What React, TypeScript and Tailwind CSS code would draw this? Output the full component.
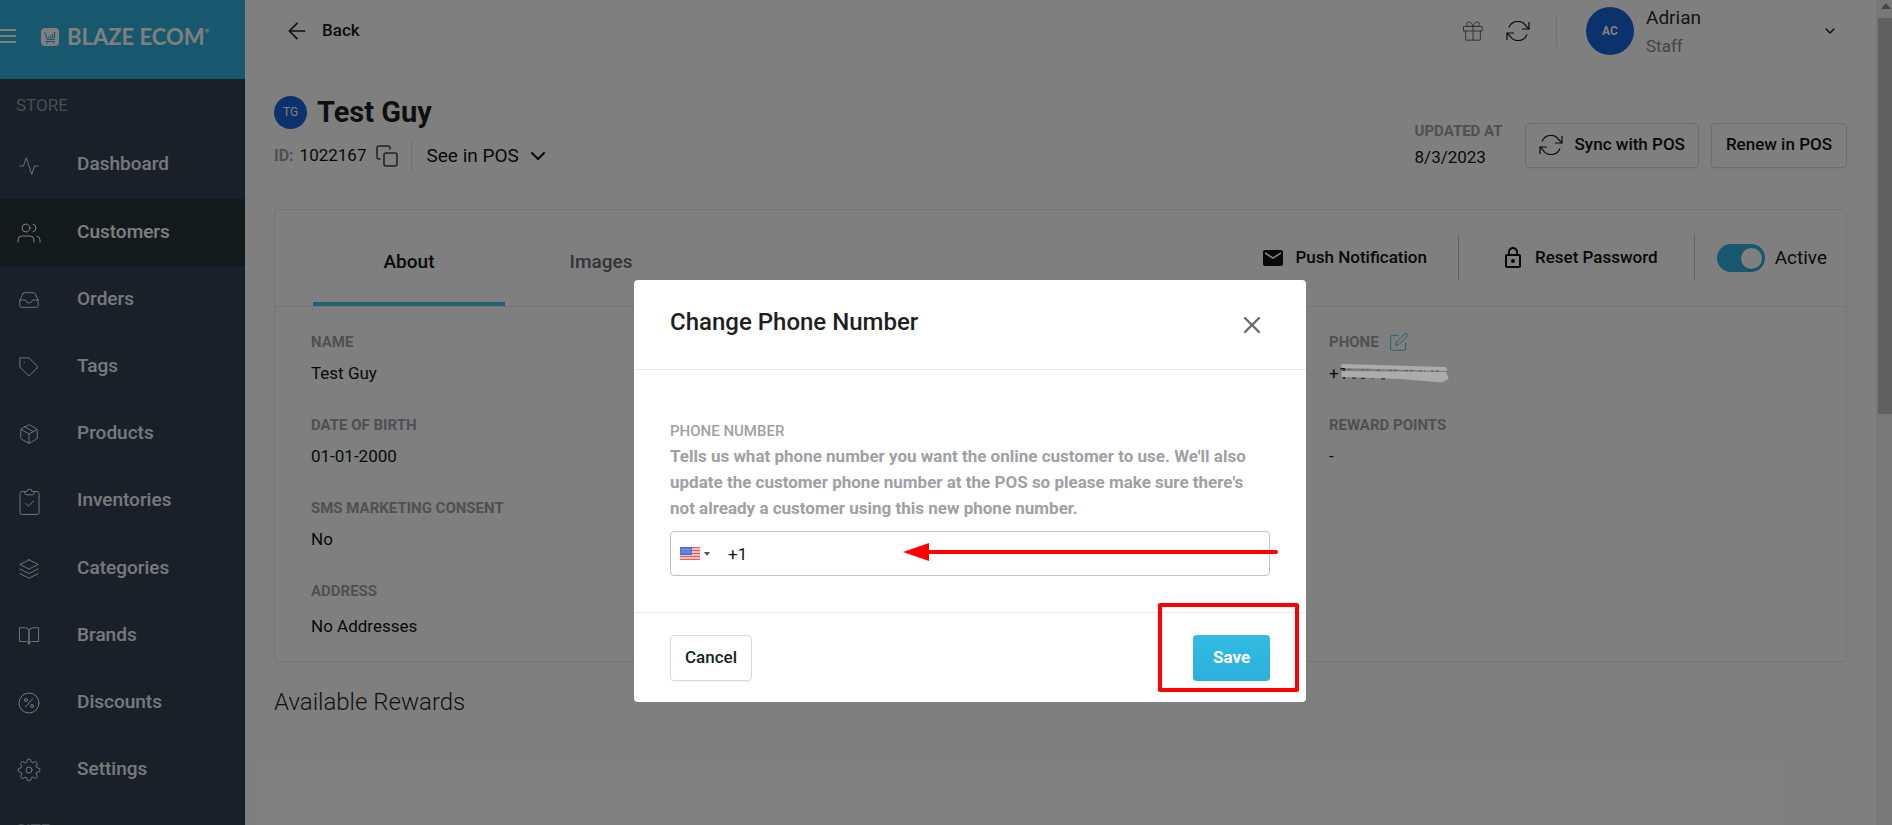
import type { ComponentType, ReactNode } from 'react';
import {
  FiActivity,
  FiArrowLeft,
  FiBookOpen,
  FiChevronDown,
  FiCopy,
  FiEdit,
  FiGift,
  FiInbox,
  FiLayers,
  FiPackage,
  FiSettings,
  FiTag,
  FiUsers,
  FiX,
} from 'react-icons/fi';
import { MdEmail, MdLockOutline } from 'react-icons/md';

type IconProps = { className?: string };

function SyncIcon({ className }: IconProps) {
  return (
    <svg viewBox="0 0 24 20" fill="none" stroke="currentColor" strokeWidth="1.2" className={className}>
      <path d="M23 1v7h-7M1 19v-7h7" />
      <path d="M3 6.500a9.500 9.500 0 0 1 17-1.500l3 3M21 13.500a9.500 9.500 0 0 1-17 1.500l-3-3" />
    </svg>
  );
}

function ClipboardIcon({ className }: IconProps) {
  return (
    <svg viewBox="0 0 22 28" fill="none" stroke="currentColor" strokeLinejoin="round" strokeLinecap="round" className={className}>
      <path d="M6 3H3a2 2 0 0 0-2 2v20a2 2 0 0 0 2 2h16a2 2 0 0 0 2-2V5a2 2 0 0 0-2-2h-3" />
      <path d="M6 3h2.500a2.500 2.500 0 0 1 5 0H16v1.500A2 2 0 0 1 14 6.500H8A2 2 0 0 1 6 4.500z" />
      <path d="M7 15.500l3 3 5-5.500" />
    </svg>
  );
}

function DiscountIcon({ className }: IconProps) {
  return (
    <svg viewBox="0 0 22 22" fill="none" stroke="currentColor" strokeLinecap="round" className={className}>
      <circle cx="11" cy="11" r="10" />
      <circle cx="8" cy="8" r="1.500" />
      <circle cx="14" cy="14" r="1.500" />
      <path d="M14.500 7l-7 8" />
    </svg>
  );
}

function LogoMark({ className }: IconProps) {
  return (
    <svg viewBox="0 0 18 18" className={className}>
      <rect width="18" height="18" rx="4" fill="#fff" />
      <g fill="none" stroke="#2eb1dc">
        <path d="M3 5h1.500l1.500 6.500h7.500M4.500 13.500h9.500" />
        <path d="M7.500 10.500V8.500M9.500 10.500V7.500M11.500 10.500V6M13.500 10.500V4" strokeWidth="1.200" />
      </g>
      <circle cx="6" cy="15" r="0.800" fill="#2eb1dc" />
      <circle cx="12.500" cy="15" r="0.800" fill="#2eb1dc" />
    </svg>
  );
}

function UsFlag({ className }: IconProps) {
  return (
    <svg viewBox="0 0 20 13" className={className}>
      <rect width="20" height="13" fill="#f7dcdc" />
      <path d="M0 .5h20M0 3.500h20M0 6.500h20M0 9.500h20M0 12.500h20" stroke="#e2605d" strokeWidth="1.500" />
      <rect width="12" height="8" fill="#4a74d8" />
      <path d="M1.500 2.500h9M1.500 5h9" stroke="#c5d3f5" strokeDasharray="1 1" />
    </svg>
  );
}

// Marker strokes hiding the digits, kept above the backdrop
function Redaction({ className }: IconProps) {
  return (
    <svg viewBox="0 0 108 21" className={className}>
      <path d="M2 3L104 6" stroke="#acacac" strokeWidth="4" strokeLinecap="round" />
      <path d="M2 9.500L104 10.500L106 15L101 18L60 14.500L2 12.500z" fill="#acacac" stroke="#acacac" strokeWidth="3" strokeLinejoin="round" />
      <path d="M2 6.300h10M20 6.800h9M36 7h5M48 7.300h9M64 7.500h8M78 7.800h6M90 8h9" stroke="#4a4a4a" strokeWidth="0.800" strokeDasharray="3 2" />
      <path d="M3 14.500h1M11 15.200h4M20 15.400h4M31 15.600h1M40 15.800h4" stroke="#222" />
    </svg>
  );
}

const NAV: { label: string; icon: ComponentType<IconProps>; size: string; active?: boolean }[] = [
  { label: 'Dashboard', icon: FiActivity, size: 'size-[22px]' },
  { label: 'Customers', icon: FiUsers, size: 'size-6', active: true },
  { label: 'Orders', icon: FiInbox, size: 'size-[22px]' },
  { label: 'Tags', icon: FiTag, size: 'size-[22px]' },
  { label: 'Products', icon: FiPackage, size: 'size-[22px]' },
  { label: 'Inventories', icon: ClipboardIcon, size: 'w-[21px] h-7' },
  { label: 'Categories', icon: FiLayers, size: 'size-[22px]' },
  { label: 'Brands', icon: FiBookOpen, size: 'size-[22px]' },
  { label: 'Discounts', icon: DiscountIcon, size: 'size-[22px]' },
  { label: 'Settings', icon: FiSettings, size: 'size-6' },
];

function Sidebar() {
  return (
    <aside className="flex w-[245px] shrink-0 flex-col bg-[#324050]">
      <div className="flex h-[79px] shrink-0 items-start gap-[25px] bg-[#2eb1dc] pt-7 text-white">
        <button aria-label="Toggle menu" className="mt-px flex w-4 flex-col gap-1">
          <span className="h-[2px] w-4 bg-white" />
          <span className="h-[2px] w-4 bg-white" />
          <span className="h-[2px] w-4 bg-white" />
        </button>
        <a href="#" className="flex items-center gap-2">
          <LogoMark className="size-[18px]" />
          <span className="flex items-start font-[Lato,sans-serif] text-[22px] leading-[18px] font-bold">
            BLAZE ECOM
            <span className="text-[6px] leading-[6px]">®</span>
          </span>
        </a>
      </div>
      <p className="flex h-[53px] shrink-0 items-center pl-4 text-[17px] text-[#959ba3]">STORE</p>
      <nav className="flex h-[672px] shrink-0 flex-col">
        {NAV.map(({ label, icon: Icon, size, active }) => (
          <a
            key={label}
            href="#"
            className={`flex flex-1 items-center text-[19px] font-medium ${
              active ? 'bg-[#283339] text-white' : 'text-[#f0f2f5]'
            }`}
          >
            <span className="flex w-[58px] shrink-0 justify-center">
              <Icon className={`${size} stroke-1`} />
            </span>
            <span className="pb-[2px] pl-[19px]">{label}</span>
          </a>
        ))}
      </nav>
      <p className="pt-[14px] pl-4 text-[17px] text-[#959ba3]">SITE</p>
    </aside>
  );
}

function TopBar() {
  return (
    <header className="flex h-[62px] items-center pr-[7px] pl-[10px]">
      <a href="#" className="flex items-center gap-3 text-[17px] font-medium text-[#0f231e]">
        <FiArrowLeft className="size-[26px] stroke-[1.5]" />
        Back
      </a>
      <div className="ml-auto flex items-center">
        <button aria-label="Rewards">
          <FiGift className="size-[22px] stroke-1 text-[#56625f]" />
        </button>
        <button aria-label="Refresh" className="ml-[22px]">
          <SyncIcon className="h-5 w-6" />
        </button>
        <span className="ml-[26px] h-[30px] w-px bg-[#e2e2ea]" />
        <button className="ml-[29px] flex w-[254px] items-center text-left">
          <span className="flex size-12 items-center justify-center rounded-full bg-[#1864dc] text-xs font-bold text-white">
            AC
          </span>
          <span className="ml-3 flex flex-col pt-[2px]">
            <span className="text-[19px] leading-7 text-[#1f2f2b]">Adrian</span>
            <span className="text-[17px] leading-7 text-[#8a8a8a]">Staff</span>
          </span>
          <FiChevronDown className="mr-[2px] ml-auto size-4" />
        </button>
      </div>
    </header>
  );
}

function PageTitle() {
  return (
    <div className="flex items-start justify-between pt-8">
      <div>
        <div className="flex h-9 items-center gap-[10px]">
          <span className="flex size-[33px] items-center justify-center rounded-full bg-[#1864dc] text-xs text-white">
            TG
          </span>
          <h1 className="text-[29px] leading-9 font-bold text-[#1f1f1f]">Test Guy</h1>
        </div>
        <div className="mt-[11px] flex h-[30px] items-center">
          <span className="text-base font-bold text-[#9fa0a5]">ID:</span>
          <span className="ml-[6px] text-[17px]">1022167</span>
          <button aria-label="Copy ID" className="ml-[9px]">
            <FiCopy className="size-6 stroke-[1.5] text-[#33423e]" />
          </button>
          <span className="ml-3 h-[30px] w-px bg-[#e2e2ea]" />
          <button className="ml-[14px] flex items-center gap-[7px] text-[19px]">
            See in POS
            <FiChevronDown className="size-6" />
          </button>
        </div>
      </div>
      <div className="flex items-center gap-3 pt-[23px]">
        <div className="mt-1 mr-[10px]">
          <p className="text-[15px] leading-5 font-bold text-[#9fa0a5]">UPDATED AT</p>
          <p className="text-[17px] leading-8">8/3/2023</p>
        </div>
        <button className="flex h-[45px] items-center gap-3 rounded border border-[#dcdcd6] px-[13px] text-[17px] font-medium shadow-xs">
          <SyncIcon className="h-5 w-6" />
          Sync with POS
        </button>
        <button className="h-[45px] rounded border border-[#dcdcd6] px-[14px] text-[17px] font-medium shadow-xs">
          Renew in POS
        </button>
      </div>
    </div>
  );
}

function Field({ label, action, children }: { label: string; action?: ReactNode; children: ReactNode }) {
  return (
    <div>
      <dt className="flex h-[22px] items-center gap-[10px] text-[15px] font-bold text-[#9fa0a5]">
        {label}
        {action}
      </dt>
      <dd className="pt-2 text-[17px] leading-[25px]">{children}</dd>
    </div>
  );
}

function CustomerCard() {
  return (
    <section className="mt-9 rounded border border-[#ebebef]">
      <div className="flex h-[97px] justify-between border-b border-[#ebebef] pl-[38px]">
        <div role="tablist" className="flex text-[19px] font-medium">
          <button role="tab" aria-selected="true" className="w-48 border-b-4 border-[#56bce0] pt-3">
            About
          </button>
          <button role="tab" aria-selected="false" className="w-48 border-b-4 border-transparent pt-3 text-[#63686f]">
            Images
          </button>
        </div>
        <div className="flex items-center pr-[19px] text-[17px] font-medium">
          <button className="flex items-center gap-[10px] pr-[31px]">
            <MdEmail className="size-6" />
            Push Notification
          </button>
          <span className="h-[46px] w-px bg-[#c4c4cc]" />
          <button className="flex items-center gap-[10px] pr-9 pl-[42px]">
            <MdLockOutline className="size-6" />
            Reset Password
          </button>
          <span className="h-[46px] w-px bg-[#c4c4cc]" />
          <label className="ml-[22px] flex items-center gap-[10px] text-[19px] font-normal">
            <input type="checkbox" defaultChecked className="peer sr-only" />
            <span className="flex h-7 w-12 items-center justify-end rounded-full bg-[#2eb1dc] pr-[3px]">
              <span className="size-[21px] rounded-full bg-white shadow" />
            </span>
            Active
          </label>
        </div>
      </div>
      <div className="grid grid-cols-3 gap-x-7 px-9 pt-6 pb-[22px]">
        <dl className="flex flex-col gap-7">
          <Field label="NAME">Test Guy</Field>
          <Field label="DATE OF BIRTH">01-01-2000</Field>
          <Field label="SMS MARKETING CONSENT">No</Field>
          <Field label="ADDRESS">
            <span className="block pt-1">No Addresses</span>
          </Field>
        </dl>
        <dl className="col-start-3 flex flex-col gap-7">
          <Field
            label="PHONE"
            action={
              <button aria-label="Edit phone">
                <FiEdit className="size-5 stroke-1 text-[#2eb1dc]" />
              </button>
            }
          >
            <span className="relative">
              +1
              <Redaction className="absolute top-0 left-3 z-20 h-[21px] w-[108px] max-w-none" />
            </span>
          </Field>
          <Field label="REWARD POINTS">-</Field>
        </dl>
      </div>
    </section>
  );
}

function ScrollBar() {
  return (
    <div aria-hidden="true" className="flex w-4 shrink-0 flex-col items-center bg-[#f1f1f1]">
      <svg viewBox="0 0 16 18" className="h-[18px] w-4">
        <path d="M5 9l5-6 5 6z" fill="#8b8b8b" />
      </svg>
      <div className="ml-[2px] h-[48%] w-[14px] bg-[#c1c1c1]" />
    </div>
  );
}

function PhoneDialog() {
  return (
    <div
      role="dialog"
      aria-modal="true"
      aria-labelledby="dialog-title"
      className="relative mt-[280px] w-full max-w-2xl self-start rounded bg-white"
    >
      <div className="flex h-[90px] items-center justify-between border-b border-[#ebebef] px-9">
        <h2 id="dialog-title" className="pb-[6px] text-2xl font-medium text-[#1f1f1f]">
          Change Phone Number
        </h2>
        <button aria-label="Close" className="mr-1">
          <FiX className="size-7 text-[#6b6b6b]" />
        </button>
      </div>
      <div className="px-9 pt-[51px] pb-9">
        <label htmlFor="phone" className="block text-[#9fa0a5]">
          <span className="block text-[15px] leading-5 font-medium">PHONE NUMBER</span>
          <span className="block pt-[2px] text-[17px] leading-[26px] font-bold">
            Tells us what phone number you want the online customer to use. We'll also update the customer phone
            number at the POS so please make sure there's not already a customer using this new phone number.
          </span>
        </label>
        <div className="mt-[10px] flex h-[45px] items-center rounded border border-[#c4c4c8] pl-[9px]">
          <button aria-label="Country: United States" className="flex items-center gap-1">
            <UsFlag className="h-[13px] w-5" />
            <span className="border-x-[3px] border-t-4 border-x-transparent border-t-[#555]" />
          </button>
          <input
            id="phone"
            type="tel"
            defaultValue="+1"
            className="ml-[18px] h-full min-w-0 flex-1 bg-transparent text-[17px] outline-none"
          />
        </div>
      </div>
      <div className="flex h-[90px] items-center justify-between border-t border-[#e6e8f2] px-9">
        <button className="h-[46px] rounded border border-[#dedcd2] px-[14px] text-[17px] font-medium text-[#15241f] shadow-xs">
          Cancel
        </button>
        <button className="h-[46px] w-[77px] rounded bg-linear-to-b from-[#33bbe2] to-[#2bb0dd] text-[17px] font-bold text-white">
          Save
        </button>
      </div>
      {/* callouts over the form */}
      <svg viewBox="0 0 378 20" className="absolute top-[262px] right-[26px] h-5 w-[378px]">
        <path d="M24 10h350" stroke="#f00" strokeWidth="4" strokeLinecap="round" />
        <path d="M1 10L27 1v18z" fill="#f00" />
      </svg>
      <div className="absolute right-[7px] bottom-[10px] h-[89px] w-[141px] rounded-xs border-4 border-[#f00]" />
    </div>
  );
}

export default function App() {
  return (
    <div className="relative flex h-screen overflow-hidden bg-white font-[Roboto,sans-serif] text-[#0a1512]">
      <Sidebar />
      <main className="min-w-0 flex-1 px-[29px]">
        <TopBar />
        <PageTitle />
        <CustomerCard />
        <h2 className="mt-6 text-2xl font-light text-[#1f1f1f]">Available Rewards</h2>
      </main>
      <ScrollBar />
      <div className="absolute inset-0 z-10 flex justify-center bg-black/50 pl-12">
        <PhoneDialog />
      </div>
    </div>
  );
}
